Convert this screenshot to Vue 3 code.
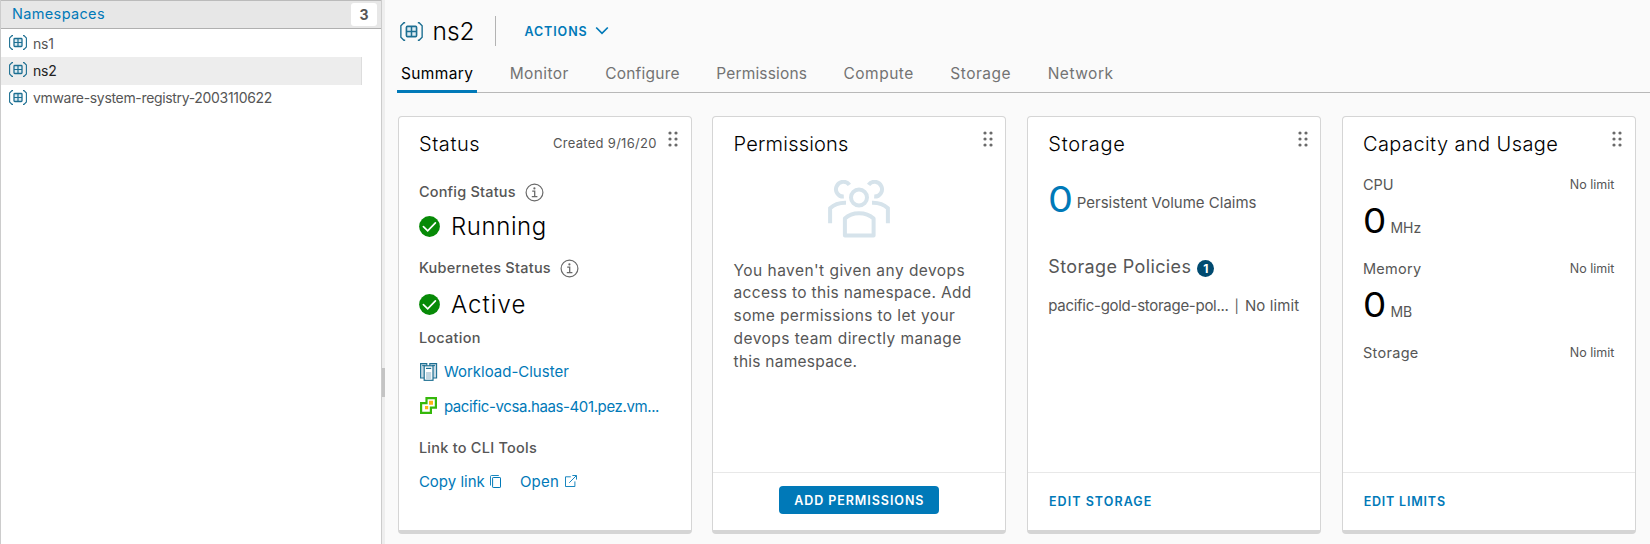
<script setup>
import { h } from 'vue'

const namespaces = [
  { name: 'ns1', cls: 'ns1' },
  { name: 'ns2', cls: 'ns2', selected: true },
  { name: 'vmware-system-registry-2003110622', cls: 'registry' },
]

const tabs = ['Summary', 'Monitor', 'Configure', 'Permissions', 'Compute', 'Storage', 'Network']

const usage = [
  { label: 'CPU', value: '0', unit: 'MHz' },
  { label: 'Memory', value: '0', unit: 'MB' },
  { label: 'Storage' },
]

const NamespaceIcon = () =>
  h('svg', { viewBox: '0 0 18 15', fill: 'none', stroke: '#1d6f92' }, [
    h('path', { d: 'M4 .6H3L.6 3v9L3 14.4H4M14 .6H15L17.4 3v9L15 14.4H14', 'stroke-width': 1.1 }),
    h('rect', { x: 5, y: 3.5, width: 8, height: 8, rx: 0.8, fill: '#dcebf2', 'stroke-width': 1.3 }),
    h('path', { d: 'M9 3.5v8M5 7.5h8', 'stroke-width': 1.2 }),
  ])

const DragDots = () =>
  h('svg', { viewBox: '0 0 10 16', fill: '#6a6a6a' },
    [2, 8, 14].flatMap((y) => [2, 8].map((x) => h('circle', { cx: x, cy: y, r: 1.6 }))))

const InfoIcon = () =>
  h('svg', { viewBox: '0 0 19 19', fill: 'none', stroke: '#6a6a6a' }, [
    h('circle', { cx: 9.5, cy: 9.5, r: 8.4, 'stroke-width': 1.2 }),
    h('path', { d: 'M7.2 8.2h2.5v5.4M6.8 13.7h5.6', 'stroke-width': 1.3 }),
    h('circle', { cx: 9.4, cy: 5.4, r: 1.1, fill: '#6a6a6a', stroke: 'none' }),
  ])

const CheckIcon = () =>
  h('svg', { viewBox: '0 0 21 21' }, [
    h('circle', { cx: 10.5, cy: 10.5, r: 10.4, fill: '#078a07' }),
    h('path', { d: 'M4.4 10.7l4.3 4.2 7.7-8.1', fill: 'none', stroke: '#fff', 'stroke-width': 1.7, 'stroke-linecap': 'round' }),
  ])
</script>

<template>
  <div class="app">
    <aside class="sidebar">
      <header class="side-head">
        <a class="side-title">Namespaces</a>
        <span class="side-count">3</span>
      </header>
      <ul class="ns-list">
        <li v-for="n in namespaces" :key="n.name" :class="{ selected: n.selected }">
          <NamespaceIcon class="ns-icon" />
          <span :class="n.cls">{{ n.name }}</span>
        </li>
      </ul>
    </aside>
    <div class="splitter"><i /></div>

    <main class="main">
      <div class="title-bar">
        <NamespaceIcon class="title-icon" />
        <h1>ns2</h1>
        <span class="divider" />
        <button class="actions">ACTIONS</button>
        <svg class="chevron" viewBox="0 0 14 9"><path d="M1.2 1.5L7 7.3l5.8-5.8" fill="none" stroke="#0079b8" stroke-width="1.7" /></svg>
      </div>

      <nav class="tabs">
        <a v-for="(t, i) in tabs" :key="t" :class="['t-' + t.toLowerCase(), { active: i === 0 }]">{{ t }}</a>
      </nav>

      <section class="cards">
        <article class="card">
          <div class="card-head">
            <h2 class="h-status">Status</h2>
            <span class="created">Created 9/16/20</span>
            <DragDots class="dots" />
          </div>
          <div class="label config">Config Status <InfoIcon class="info" /></div>
          <div class="state first"><CheckIcon class="check" /><span class="running">Running</span></div>
          <div class="label kube">Kubernetes Status <InfoIcon class="info" /></div>
          <div class="state second"><CheckIcon class="check" /><span class="act">Active</span></div>
          <div class="label location">Location</div>
          <div class="link-row">
            <svg class="loc-icon" viewBox="0 0 18 18" stroke="#1d6f92">
              <path d="M.6 .6h6.2v14.4h-6.2zM9.8 .6h6.8v14.4h-6.8z" fill="#c9dbe5" stroke-width="1.1" />
              <path d="M2.2 2.6h3M12 2.6h3" stroke-width="1" />
              <rect x="4.2" y="2.8" width="8.8" height="14.5" fill="#fff" stroke-width="1.2" />
              <path d="M6 5.4h5.2" stroke-width="1.2" />
              <path d="M6 9h5.2v7.5H6z" fill="#c3d7e2" stroke="none" />
            </svg>
            <a class="workload">Workload-Cluster</a>
          </div>
          <div class="link-row">
            <svg class="loc-icon" viewBox="0 0 18 18" fill="none">
              <path d="M6.5 1.1H15.9V10.7H10.9V15.9H1.1V6.2H6.5Z" fill="#fff" stroke="#35b80a" stroke-width="2.2" />
              <path d="M9 3.8h4v4H9zM5 9h3.2v3.2H5z" fill="#fdb515" />
            </svg>
            <a class="vcsa">pacific-vcsa.haas-401.pez.vm...</a>
          </div>
          <div class="label cli">Link to CLI Tools</div>
          <div class="cli-links">
            <a class="copy">Copy link</a>
            <svg class="copy-icon" viewBox="0 0 11 13" fill="none" stroke="#0079b8">
              <rect x="2.6" y="2.5" width="7.9" height="10" rx=".6" />
              <path d="M.5 10.5v-9q0-1 1-1h7.3" stroke-width=".9" />
            </svg>
            <a class="open">Open</a>
            <svg class="open-icon" viewBox="0 0 12 12" fill="none" stroke="#0079b8" stroke-width=".9">
              <path d="M5.8 1.8H.5v9.7h9.4V6.4M4.2 7.8L11.2.8M7.4.5h4.1v4.1" />
            </svg>
          </div>
        </article>

        <article class="card">
          <div class="card-head">
            <h2 class="h-perm">Permissions</h2>
            <DragDots class="dots" />
          </div>
          <svg class="people" viewBox="0 0 62 58" fill="none" stroke="#d6e3eb" stroke-width="4">
            <circle cx="31" cy="17.5" r="8" />
            <path d="M21.4 4.9A7.4 7.4 0 1 0 15.8 16.6M40.6 4.9A7.4 7.4 0 1 1 46.2 16.6" />
            <path d="M18 22.7C11.5 22.5 6 24.5 2.1 28.3V43.3M44 22.7C50.5 22.5 56 24.5 59.9 28.3V43.3" />
            <path d="M16.9 38.5C24 31.4 38 31.4 45.6 38.5V55.4H16.9Z" stroke-linejoin="round" />
          </svg>
          <p class="perm-text">
            <span class="l1">You haven't given any devops</span><br />
            <span class="l2">access to this namespace. Add</span><br />
            <span class="l3">some permissions to let your</span><br />
            <span class="l4">devops team directly manage</span><br />
            <span class="l5">this namespace.</span>
          </p>
          <footer class="card-foot center"><button class="primary">ADD PERMISSIONS</button></footer>
        </article>

        <article class="card">
          <div class="card-head">
            <h2 class="h-stor">Storage</h2>
            <DragDots class="dots" />
          </div>
          <div class="pvc"><a class="big-zero">0</a><span class="pvc-text">Persistent Volume Claims</span></div>
          <div class="policies"><span>Storage Policies</span><b class="badge">1</b></div>
          <div class="policy"><span class="pname">pacific-gold-storage-pol...</span><span class="bar">|</span><span class="plimit">No limit</span></div>
          <footer class="card-foot"><a class="flat edit-storage">EDIT STORAGE</a></footer>
        </article>

        <article class="card">
          <div class="card-head">
            <h2 class="h-cap">Capacity and Usage</h2>
            <DragDots class="dots" />
          </div>
          <div v-for="u in usage" :key="u.label" class="usage">
            <div class="usage-head"><span :class="'u-' + u.label.toLowerCase()">{{ u.label }}</span><span class="limit">No limit</span></div>
            <div v-if="u.value" class="usage-value"><span class="zero">{{ u.value }}</span><span class="unit">{{ u.unit }}</span></div>
          </div>
          <footer class="card-foot"><a class="flat edit-limits">EDIT LIMITS</a></footer>
        </article>
      </section>
    </main>
  </div>
</template>

<style>
body { background: #fafafa; overflow: hidden; }
</style>

<style scoped>
* { box-sizing: border-box; }
.app { display: flex; height: 544px; font-family: Inter, "Liberation Sans", sans-serif; color: #565656; white-space: nowrap; }
svg { display: block; flex: none; }
a { color: #0079b8; }
button { font-family: inherit; border: 0; padding: 0; background: none; }

.sidebar { width: 381px; flex: none; background: #fff; border-left: 1px solid #ccc; }
.side-head { height: 29px; background: #e7e7e7; border-top: 1px solid #bbb; border-bottom: 1px solid #b0b0b0; display: flex; justify-content: space-between; align-items: center; padding: 0 4px 0 11px; }
.side-title { font-size: 14.5px; margin-top: -2px; letter-spacing: .35px; }
.side-count { width: 26px; height: 23px; background: #fff; border-radius: 3px; text-align: center; font-size: 14px; font-weight: 700; line-height: 23px; }
.ns-list { list-style: none; margin: 1px 0 0; padding: 0; }
.ns-list li { height: 27.3px; width: 361px; display: flex; align-items: center; padding-left: 8px; font-size: 14px; }
.ns-list li.selected { background: #ededed; color: #222; border-right: 1px solid #ddd; }
.ns1, .ns2 { letter-spacing: -.2px; }
.registry { letter-spacing: -.33px; margin-top: -1px; }
.ns-icon { width: 18px; height: 15px; margin-right: 6px; margin-top: -2px; }

.splitter { width: 4px; flex: none; background: #eee; border-left: 1px solid #ccc; padding-top: 368px; }
.splitter i { display: block; width: 3px; height: 29px; background: #c4c4c4; }

.main { flex: 1; min-width: 0; background: #fafafa; padding-left: 12px; }
.title-bar { display: flex; align-items: center; height: 62px; padding-left: 3px; }
.title-icon { width: 23px; height: 19px; }
h1 { margin: 0 0 0 9.5px; font-weight: 350; font-size: 24.5px; color: #000; width: 62.5px; }
.divider { width: 1px; height: 30px; background: #b3b3b3; }
.actions { color: #0079b8; font-size: 12.5px; font-weight: 600; letter-spacing: .9px; margin-left: 28.5px; width: 70px; text-align: left; }
.chevron { width: 14px; height: 9px; margin-top: -1px; }

.tabs { display: flex; height: 31px; border-bottom: 1px solid #b8b8b8; }
.tabs a { color: #737373; font-size: 15.5px; line-height: 23px; height: 31px; padding: 0 4px; margin-right: 28.5px; letter-spacing: .38px; }
.tabs a.active { color: #000; border-bottom: 3px solid #0079b8; letter-spacing: .35px; }
.tabs .t-configure { letter-spacing: .23px; }
.tabs .t-permissions { letter-spacing: .16px; }
.tabs .t-compute { letter-spacing: .48px; }
.tabs .t-storage { letter-spacing: .53px; }
.tabs .t-network { letter-spacing: .5px; }

.cards { display: flex; gap: 20.7px; margin: 23px 0 0 .6px; }
.card { width: 294px; height: 418px; flex: none; background: #fff; border: 1px solid #d5d5d5; border-bottom-width: 4px; border-radius: 4px; padding: 13px 20.3px 0; position: relative; display: flex; flex-direction: column; }
.card-head { display: flex; height: 28px; align-items: center; justify-content: space-between; flex: none; }
h2 { margin: 0; font-weight: 350; font-size: 20px; line-height: 28px; color: #000; }
.h-status { letter-spacing: .6px; }
.h-perm { letter-spacing: .2px; }
.h-stor { letter-spacing: .75px; }
.h-cap { letter-spacing: .42px; }
.created { font-size: 13px; margin: -2px 13.5px 0 0; letter-spacing: .3px; }
.dots { width: 10px; height: 16px; position: absolute; right: 12.3px; top: 14px; }

.label { font-size: 14.5px; font-weight: 500; line-height: 20px; height: 20px; display: flex; align-items: center; letter-spacing: .25px; }
.info { width: 19px; height: 19px; margin-left: 9px; }
.config { margin-top: 24px; letter-spacing: .2px; }
.kube { margin-top: 17px; }
.location { margin-top: 9px; }
.cli { margin-top: 22px; }
.state { height: 30px; display: flex; align-items: center; color: #000; font-size: 24px; font-weight: 350; }
.state.first { margin-top: 9px; }
.state.second { margin-top: 11px; }
.running { letter-spacing: .6px; }
.act { letter-spacing: 1.1px; }
.check { width: 21px; height: 21px; margin-left: .5px; margin-right: 10.5px; }
.link-row { display: flex; align-items: center; height: 20px; margin-top: 14px; font-size: 15px; }
.loc-icon { width: 18px; height: 18px; margin-left: .8px; margin-right: 6.2px; }
.workload { margin-top: -1px; }
.vcsa { letter-spacing: -.38px; }
.cli-links { display: flex; align-items: center; height: 20px; margin-top: 13px; font-size: 15px; }
.copy { width: 71px; }
.copy-icon { width: 11px; height: 13px; margin-right: 19px; }
.open { width: 45px; letter-spacing: .2px; }
.open-icon { width: 12px; height: 12px; }

.people { width: 62px; height: 58px; margin: 22px auto 0; }
.perm-text { margin: 21.5px 0 0; font-size: 15.5px; line-height: 22.8px; }
.l1 { letter-spacing: .45px; }
.l2 { letter-spacing: .32px; }
.l3 { letter-spacing: .38px; }
.l4 { letter-spacing: .45px; }
.l5 { letter-spacing: .25px; }
.card-foot { position: absolute; left: 0; right: 0; bottom: 0; height: 58px; border-top: 1px solid #e8e8e8; display: flex; align-items: center; padding: 0 21px 1px; }
.center { justify-content: center; padding-bottom: 4px; }
.primary { background: #0079b8; color: #fff; width: 160px; height: 28px; border-radius: 4px; font-size: 12.5px; font-weight: 600; letter-spacing: .95px; padding-top: 1px; }
.flat { font-size: 12.5px; font-weight: 600; letter-spacing: 1.05px; }
.edit-limits { letter-spacing: .8px; }

.pvc { display: flex; height: 40px; margin-top: 21px; }
.big-zero { font-size: 36px; font-weight: 400; line-height: 40px; width: 23px; margin-right: 5.5px; transform: scaleX(1.1); transform-origin: left; }
.pvc-text { font-size: 15px; line-height: 20px; margin-top: 13.5px; }
.policies { display: flex; align-items: center; height: 24px; margin-top: 35.5px; font-size: 18px; letter-spacing: .37px; }
.badge { width: 17px; height: 17px; border-radius: 50%; background: #004a70; color: #fff; font-size: 12px; line-height: 17px; text-align: center; margin: 3px 0 0 6px; letter-spacing: 0; }
.policy { display: flex; height: 20px; line-height: 20px; margin-top: 17px; font-size: 15px; }
.pname { letter-spacing: -.28px; }
.plimit { letter-spacing: .1px; }
.bar { margin: 0 6px; font-size: 13px; }

.usage-head { display: flex; justify-content: space-between; height: 20px; line-height: 20px; font-size: 14.5px; }
.usage { margin-top: 19.5px; }
.card-head + .usage { margin-top: 16.5px; }
.u-memory, .u-storage { letter-spacing: .3px; }
.limit { font-size: 12.5px; }
.usage-value { display: flex; height: 36px; margin-top: 8.5px; }
.usage-value + .usage { margin-top: 19.5px; }
.zero { color: #000; font-size: 33.5px; font-weight: 400; line-height: 36px; width: 22px; margin-right: 5.5px; transform: scaleX(1.1); transform-origin: left; }
.unit { font-size: 14px; line-height: 20px; margin-top: 15px; }
</style>
